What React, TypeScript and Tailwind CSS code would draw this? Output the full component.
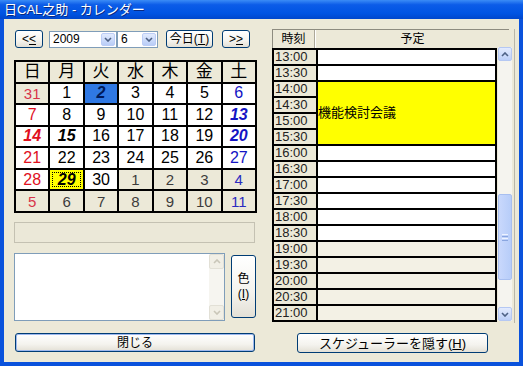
import React from 'react';
import clsx from 'clsx';

type Day = {
    n: number;
    kind: 'cur' | 'other';
    dow: number;
    bold?: boolean;
    selected?: boolean;
    today?: boolean;
};

const weekHeads = ['日', '月', '火', '水', '木', '金', '土'];

const weeks: Day[][] = [
    [
        { n: 31, kind: 'other', dow: 0 },
        { n: 1, kind: 'cur', dow: 1 },
        { n: 2, kind: 'cur', dow: 2, bold: true, selected: true },
        { n: 3, kind: 'cur', dow: 3 },
        { n: 4, kind: 'cur', dow: 4 },
        { n: 5, kind: 'cur', dow: 5 },
        { n: 6, kind: 'cur', dow: 6 },
    ],
    [7, 8, 9, 10, 11, 12, 13].map((n, i) => ({ n, kind: 'cur', dow: i, bold: n === 13 })),
    [14, 15, 16, 17, 18, 19, 20].map((n, i) => ({ n, kind: 'cur', dow: i, bold: n === 14 || n === 15 || n === 20 })),
    [21, 22, 23, 24, 25, 26, 27].map((n, i) => ({ n, kind: 'cur', dow: i })),
    [
        { n: 28, kind: 'cur', dow: 0 },
        { n: 29, kind: 'cur', dow: 1, bold: true, today: true },
        { n: 30, kind: 'cur', dow: 2 },
        { n: 1, kind: 'other', dow: 3 },
        { n: 2, kind: 'other', dow: 4 },
        { n: 3, kind: 'other', dow: 5 },
        { n: 4, kind: 'other', dow: 6 },
    ],
    [5, 6, 7, 8, 9, 10, 11].map((n, i) => ({ n, kind: 'other', dow: i })),
];

const times = [
    '13:00', '13:30', '14:00', '14:30', '15:00', '15:30', '16:00', '16:30', '17:00',
    '17:30', '18:00', '18:30', '19:00', '19:30', '20:00', '20:30', '21:00',
];

const ui = "font-['Liberation_Sans','Noto_Sans_CJK_JP',sans-serif]";

const XpButton = ({ children, className }: { children: React.ReactNode; className?: string }) => (
    <div
        className={clsx(
            'flex items-center justify-center rounded-[3px] border border-[#003c74] bg-[linear-gradient(to_bottom,#ffffff_0%,#f4f3ee_60%,#e3e0d6_100%)] text-[12px] leading-none text-black',
            className
        )}
    >
        {children}
    </div>
);

const Chevron = ({ up, color = '#4d6185' }: { up?: boolean; color?: string }) => (
    <svg width="8" height="5" viewBox="0 0 8 5">
        <path d={up ? 'M1 4 L4 1 L7 4' : 'M1 1 L4 4 L7 1'} fill="none" stroke={color} strokeWidth="1.6" />
    </svg>
);

const Combo = ({ value, className }: { value: string; className?: string }) => (
    <div className={clsx('flex h-[17px] items-stretch border border-[#7f9db9] bg-white', className)}>
        <span className="flex-1 pl-[3px] text-[12px] leading-[15px] text-black">{value}</span>
        <div className="m-px flex w-[14px] items-center justify-center rounded-[2px] border border-[#bccdf6] bg-[linear-gradient(to_bottom,#e2ebfe,#b9cdf7)]">
            <Chevron />
        </div>
    </div>
);

const dayColor = (d: Day) => {
    if (d.kind === 'other') {
        if (d.dow === 0) return 'text-[#d8344a]';
        if (d.dow === 6) return 'text-[#2a2ac0]';
        return 'text-[#3c3c3c]';
    }
    if (d.selected) return 'text-[#001a5a]';
    if (d.dow === 0) return 'text-[#e0101e]';
    if (d.dow === 6) return 'text-[#1414c4]';
    return 'text-black';
};

const dayBg = (d: Day) => {
    if (d.selected) return 'bg-[#2f78e3]';
    if (d.today) return 'bg-[#ffff00]';
    if (d.kind === 'other') return 'bg-[#ece9d8]';
    return 'bg-white';
};

const Calendar = () => (
    <div className="grid h-[153px] grid-cols-7 grid-rows-7 gap-[2px] bg-black p-[2px]">
        {weekHeads.map((h) => (
            <div key={h} className="flex items-center justify-center bg-[#ece9d8] text-[17px] leading-none text-black">
                {h}
            </div>
        ))}
        {weeks.flat().map((d, i) => (
            <div
                key={i}
                className={clsx('flex items-center justify-center text-[16px] leading-none', dayBg(d), dayColor(d))}
            >
                {d.today ? (
                    <div className="m-[2px] flex h-[calc(100%-4px)] w-[calc(100%-4px)] items-center justify-center border border-dotted border-black font-bold italic">
                        {d.n}
                    </div>
                ) : (
                    <span className={clsx(d.bold && 'font-bold italic', d.kind === 'other' && 'text-[15px]')}>{d.n}</span>
                )}
            </div>
        ))}
    </div>
);

const Schedule = () => (
    <div className="flex h-[294px] flex-col border-r border-[#b9b6a8] pl-[1px]">
        <div className="flex h-[19px] w-[237px] border-t border-[#8e8c80]">
            <div className="flex w-[43px] items-center justify-center border-l border-[#8e8c80] border-r border-r-[#aca899] bg-[#ece9d8] text-[12px]">
                時刻
            </div>
            <div className="flex flex-1 items-center justify-center border-l border-white bg-[#ece9d8] text-[12px]">予定</div>
        </div>
        <div className="flex">
            <div className="flex gap-[2px] bg-black p-[2px]">
                <div className="flex w-[42px] flex-col gap-[2px]">
                    {times.map((t) => (
                        <div key={t} className="h-[14px] bg-[#ece9d8] pl-[1px] text-[13px] leading-[14px] text-[#222]">
                            {t}
                        </div>
                    ))}
                </div>
                <div className="flex w-[177px] flex-col gap-[2px]">
                    <div className="h-[14px] bg-white" />
                    <div className="h-[14px] bg-white" />
                    <div className="flex h-[62px] items-center bg-[#ffff00] text-[13px] text-black">機能検討会議</div>
                    {times.slice(6).map((t, i) => (
                        <div key={t} className={clsx('h-[14px]', i < 6 ? 'bg-white' : 'bg-[#f3f1e5]')} />
                    ))}
                </div>
            </div>
            <div className="ml-[1px] mt-[-1px] flex h-[274px] w-[14px] flex-col bg-[#f5f4ef]">
                <div className="flex h-[14px] items-center justify-center rounded-[2px] border border-[#b5c8f3] bg-[linear-gradient(to_bottom,#e3ebfe,#bccff8)]">
                    <Chevron up />
                </div>
                <div className="h-[133px]" />
                <div className="flex h-[86px] items-center justify-center rounded-[2px] border border-[#a8bff0] bg-[linear-gradient(to_right,#c9d8fc,#b7cdf9)]">
                    <div className="flex flex-col gap-[1px]">
                        <div className="h-px w-[6px] bg-[#eef3ff]" />
                        <div className="h-px w-[6px] bg-[#8aa6e0]" />
                        <div className="h-px w-[6px] bg-[#eef3ff]" />
                        <div className="h-px w-[6px] bg-[#8aa6e0]" />
                    </div>
                </div>
                <div className="flex-1" />
                <div className="flex h-[14px] items-center justify-center rounded-[2px] border border-[#b5c8f3] bg-[linear-gradient(to_bottom,#e3ebfe,#bccff8)]">
                    <Chevron />
                </div>
            </div>
        </div>
    </div>
);

const App = () => {
    return (
        <div className={clsx('flex h-[366px] w-[523px] flex-col bg-[#0a52dc]', ui)}>
            <div className="flex h-[19px] items-center bg-[linear-gradient(to_bottom,#3b8cf6_0%,#0c5ce8_25%,#0054e3_70%,#0047cc_100%)] pl-[4px]">
                <span className="text-[13px] leading-none text-white [text-shadow:1px_1px_0_#0a2a80]">日CAL之助 - カレンダー</span>
            </div>
            <div className="mx-[4px] mb-[4px] flex flex-1 bg-[#ece9d8]">
                {/* 左側: カレンダー */}
                <div className="ml-[10px] flex w-[243px] flex-col">
                    <div className="mt-[11px] flex h-[18px] items-center">
                        <XpButton className="ml-[1px] h-[18px] w-[28px]">
                            &lt;<span className="underline">&lt;</span>
                        </XpButton>
                        <Combo value="2009" className="ml-[6px] w-[68px]" />
                        <Combo value="6" className="w-[41px]" />
                        <XpButton className="ml-[8px] h-[18px] w-[47px]">
                            今日(<span className="underline">T</span>)
                        </XpButton>
                        <XpButton className="ml-[9px] h-[18px] w-[28px]">
                            &gt;<span className="underline">&gt;</span>
                        </XpButton>
                    </div>
                    <div className="mt-[12px]">
                        <Calendar />
                    </div>
                    <div className="mt-[9px] h-[21px] w-[241px] border border-[#c4c1b2] bg-[#ebe8d8]" />
                    <div className="mt-[10px] flex h-[68px]">
                        <div className="flex w-[211px] border border-[#7f9db9] bg-white">
                            <div className="flex-1" />
                            <div className="flex w-[15px] flex-col bg-[#f6f5f0]">
                                <div className="flex h-[15px] items-center justify-center rounded-[2px] border border-[#e2e0d6] bg-[#f1efe6]">
                                    <Chevron up color="#c9c6b8" />
                                </div>
                                <div className="flex-1" />
                                <div className="flex h-[15px] items-center justify-center rounded-[2px] border border-[#e2e0d6] bg-[#f1efe6]">
                                    <Chevron color="#c9c6b8" />
                                </div>
                            </div>
                        </div>
                        <XpButton className="ml-[6px] mt-[2px] h-[63px] w-[25px] flex-col gap-[3px]">
                            <span>色</span>
                            <span>
                                (<span className="underline">I</span>)
                            </span>
                        </XpButton>
                    </div>
                    <XpButton className="ml-[1px] mt-[12px] h-[19px] w-[240px] shadow-[inset_0_0_0_1px_#9db8ee]">閉じる</XpButton>
                </div>
                {/* 右側: スケジューラー */}
                <div className="ml-[14px] flex w-[244px] flex-col">
                    <div className="mt-[10px]">
                        <Schedule />
                    </div>
                    <XpButton className="ml-[26px] mt-[10px] h-[20px] w-[191px] text-[13px]">
                        スケジューラーを隠す(<span className="underline">H</span>)
                    </XpButton>
                </div>
            </div>
        </div>
    );
};

export default App;
